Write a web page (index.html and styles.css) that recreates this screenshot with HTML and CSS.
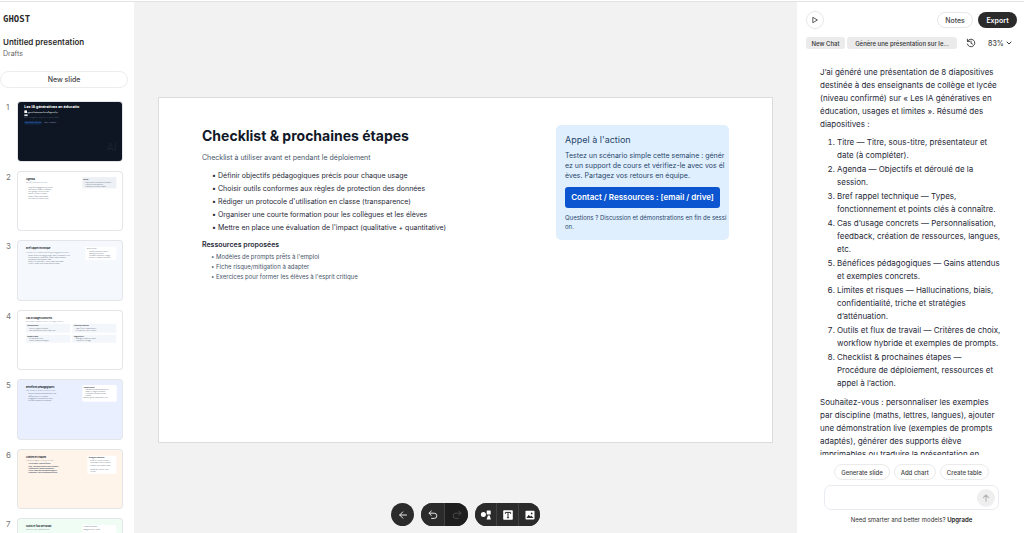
FILE: index.html
```html
<!DOCTYPE html>
<html lang="fr">
<head>
<meta charset="utf-8">
<meta name="viewport" content="width=device-width, initial-scale=1">
<title>Ghost – Untitled presentation</title>
<link rel="stylesheet" href="styles.css">
</head>
<body>
<div class="app">
  <aside class="sidebar">
    <div class="logo">GHOST</div>
    <h1 class="doc-title">Untitled presentation</h1>
    <p class="doc-folder">Drafts</p>
    <button class="new-slide" type="button">New slide</button>
    <ol class="thumbs">
      <li class="thumb-row"><span class="thumb-num">1</span>
        <svg class="thumb thumb-dark" viewBox="0 0 312 175" role="img" aria-label="Slide 1">
          <text class="t-cover" x="19" y="17">Les IA génératives en éducatio</text>
          <rect x="19" y="25" width="8" height="8" fill="#fff"/>
          <text class="t-sub-bold" x="28" y="33">ages et limites pour les collèges et lyc</text>
          <rect x="19" y="37" width="10" height="5" fill="#e5e7eb"/>
          <text class="t-dim" x="19" y="49">Public : enseignants (collège et lycée), niveau confirmé</text>
          <rect x="19" y="57" width="50" height="10" rx="2" fill="#10294a"/>
          <text class="t-link" x="22" y="64">Présentateur : [Votre nom]</text>
          <text class="t-light" x="80" y="64">Date : à compléter</text>
          <text class="t-mark" x="266" y="148">AI</text>
        </svg></li>
      <li class="thumb-row"><span class="thumb-num">2</span>
        <svg class="thumb" viewBox="0 0 312 175" role="img" aria-label="Slide 2">
          <text class="t-head" x="24" y="25">Agenda</text>
          <text class="t-note" x="24" y="33">Objectifs et déroulé de la session</text>
          <g class="t-item"><text x="30" y="47">• Objectifs pédagogiques de la session</text><text x="30" y="54">• Bref rappel technique et définitions</text><text x="30" y="61">• Cas d'usage concrets en classe</text><text x="30" y="67">• Bénéfices, limites et risques</text><text x="30" y="74">• Outils et flux de travail hybride</text><text x="30" y="80">• Checklist et prochaines étapes</text></g>
          <rect x="193" y="15" width="102" height="34" fill="#edf1f6"/>
          <text class="t-label" x="196" y="24">Déroulé</text>
          <g class="t-item"><text x="202" y="32">• Présentation et discussion (30 minutes)</text><text x="202" y="38">• Ateliers et démonstrations</text><text x="202" y="44">• Questions et retours en équipe</text></g>
        </svg></li>
      <li class="thumb-row"><span class="thumb-num">3</span>
        <svg class="thumb thumb-sky" viewBox="0 0 312 175" role="img" aria-label="Slide 3">
          <text class="t-head" x="24" y="25">Bref rappel technique</text>
          <text class="t-note" x="24" y="35">Les points clés à connaître pour un usage pédagogique des modèles</text>
          <g class="t-item"><text x="30" y="46">• Types : modèles de langage, images, audio et assistants de code</text><text x="30" y="51">• Fonctionnement : prédiction de la suite à partir de données</text><text x="30" y="57">• Entraînement sur de grands corpus</text><text x="30" y="63">• Points clés : paramètres, contexte, qualité des prompts</text><text x="30" y="70">• Limites : erreurs, biais et hallucinations possibles</text></g>
          <rect x="202" y="17" width="93" height="40" fill="#fff"/>
          <text class="t-label-light" x="207" y="25">Points à retenir</text>
          <g class="t-item"><text x="213" y="34">• Vérifier toujours les sources</text><text x="213" y="40">• Protéger les données</text><text x="213" y="45">• Formuler clairement la consigne</text><text x="213" y="50">• Tester et comparer les réponses</text></g>
        </svg></li>
      <li class="thumb-row"><span class="thumb-num">4</span>
        <svg class="thumb" viewBox="0 0 312 175" role="img" aria-label="Slide 4">
          <text class="t-head" x="24" y="25">Cas d'usages concrets</text>
          <text class="t-note" x="24" y="33">Des exemples à adapter en classe — au collège et au lycée</text>
          <g fill="#f3f6fa"><rect x="24" y="38" width="133" height="27"/><rect x="163" y="38" width="132" height="27"/><rect x="24" y="71" width="133" height="24"/><rect x="163" y="71" width="132" height="24"/></g>
          <g class="t-label"><text x="28" y="46">Personnalisation</text><text x="167" y="46">Création de ressources</text><text x="28" y="78">Feedback rapide</text><text x="167" y="78">Langues et oral</text></g>
          <g class="t-item"><text x="33" y="54">• Exercices adaptés au niveau</text><text x="33" y="60">• Parcours différenciés pour chaque élève</text><text x="173" y="54">• Quiz, fiches et supports variés</text><text x="173" y="60">• Scénarios de cours et activités</text><text x="33" y="85">• Commentaires ciblés</text><text x="33" y="90">• Grilles d'évaluation partagées</text><text x="173" y="85">• Dialogue et traduction assistée</text><text x="173" y="90">• Jeux de rôle en langue</text></g>
        </svg></li>
      <li class="thumb-row"><span class="thumb-num">5</span>
        <svg class="thumb thumb-blue" viewBox="0 0 312 175" role="img" aria-label="Slide 5">
          <text class="t-head" x="24" y="25">Bénéfices pédagogiques</text>
          <text class="t-note" x="24" y="33">Gains attendus et exemples concrets en classe</text>
          <g class="t-item"><text x="30" y="43">• Gain de temps sur la préparation des cours</text><text x="30" y="50">• Différenciation et accessibilité</text><text x="30" y="57">• Engagement et motivation des élèves</text><text x="30" y="63">• Feedback immédiat et personnalisé</text></g>
          <rect x="193" y="15" width="103" height="50" rx="4" fill="#fff"/>
          <text class="t-label" x="197" y="24">Exemple concret</text>
          <g class="t-item"><text x="202" y="31">• Produire trois niveaux d'un exercice</text><text x="202" y="37">• Relire et corriger les réponses</text><text x="202" y="42">• Comparer les résultats obtenus</text><text x="202" y="47">• Évaluer</text><text x="197" y="55">Résultat : gain de temps pour la classe</text></g>
        </svg></li>
      <li class="thumb-row"><span class="thumb-num">6</span>
        <svg class="thumb thumb-cream" viewBox="0 0 312 175" role="img" aria-label="Slide 6">
          <text class="t-head" x="24" y="25">Limites et risques</text>
          <text class="t-note" x="24" y="33">Les points de vigilance à anticiper en classe</text>
          <g class="t-item t-dark"><text x="30" y="43">• Hallucinations : réponses fausses</text><text x="30" y="50">• Biais : stéréotypes présents dans les données</text><text x="30" y="57">• Confidentialité : données personnelles</text><text x="30" y="63">• Triche : production sans apprentissage réel</text><text x="30" y="70">• Dépendance : perte d'autonomie des élèves</text></g>
          <rect x="208" y="17" width="87" height="54" fill="#fff"/>
          <text class="t-label" x="212" y="25">Stratégies d'atténuation</text>
          <g class="t-item"><text x="216" y="32">• Vérifier et croiser les sources</text><text x="216" y="38">• Anonymiser toutes les données</text><text x="216" y="49">• Évaluer le processus de travail</text><text x="216" y="59">• Définir une charte de classe</text><text x="216" y="65">• Former</text></g>
        </svg></li>
      <li class="thumb-row"><span class="thumb-num">7</span>
        <svg class="thumb thumb-mint" viewBox="0 0 312 175" role="img" aria-label="Slide 7">
          <text class="t-head" x="24" y="25">Outils et flux de travail</text>
          <text class="t-note" x="24" y="33">Critères de choix et workflow hybride</text>
          <rect x="193" y="17" width="102" height="50" fill="#fff"/>
          <text class="t-label-light" x="197" y="24">Exemples de prompts</text>
          <text class="t-item" x="197" y="32">Rédige un exercice adapté</text>
        </svg></li>
    </ol>
  </aside>

  <main class="stage">
    <article class="slide">
      <section class="slide-main">
        <h2 class="slide-title">Checklist &amp; prochaines étapes</h2>
        <p class="slide-sub">Checklist à utiliser avant et pendant le déploiement</p>
        <ul class="checks">
          <li>Définir objectifs pédagogiques précis pour chaque usage</li>
          <li>Choisir outils conformes aux règles de protection des données</li>
          <li>Rédiger un protocole d'utilisation en classe (transparence)</li>
          <li>Organiser une courte formation pour les collègues et les élèves</li>
          <li>Mettre en place une évaluation de l'impact (qualitative + quantitative)</li>
        </ul>
        <h3 class="res-title">Ressources proposées</h3>
        <ul class="resources">
          <li>Modèles de prompts prêts à l'emploi</li>
          <li>Fiche risque/mitigation à adapter</li>
          <li>Exercices pour former les élèves à l'esprit critique</li>
        </ul>
      </section>
      <section class="cta">
        <h3 class="cta-title">Appel à l'action</h3>
        <p class="cta-text">Testez un scénario simple cette semaine : génér<br>ez un support de cours et vérifiez-le avec vos él<br>èves. Partagez vos retours en équipe.</p>
        <a class="cta-link" href="#contact">Contact / Ressources : [email / drive]</a>
        <p class="cta-note">Questions ? Discussion et démonstrations en fin de sessi<br>on.</p>
      </section>
    </article>

    <div class="toolbar">
      <div class="tool-group"><button class="tool tool-round" type="button" aria-label="Back"><svg viewBox="0 0 12 12"><path class="stroke" d="M9.5 6H2.8M5.8 2.9 2.7 6l3.1 3.1"/></svg></button></div>
      <div class="tool-group">
        <button class="tool tool-wide" type="button" aria-label="Undo"><svg viewBox="0 0 12 12"><path class="stroke" d="M4.3 2 2 4.2l2.3 2.3M2.2 4.2h5a2.6 2.6 0 0 1 0 5.2H4.6"/></svg></button>
        <button class="tool tool-wide tool-off" type="button" aria-label="Redo" disabled><svg viewBox="0 0 12 12"><path class="stroke" d="M7.7 2 10 4.2 7.7 6.5M9.8 4.2h-5a2.6 2.6 0 0 0 0 5.2h2.6"/></svg></button>
      </div>
      <div class="tool-group">
        <button class="tool" type="button" aria-label="Shapes"><svg viewBox="0 0 12 12" fill="#fff"><circle cx="3.4" cy="5.6" r="2.5"/><rect x="6.7" y="1.4" width="4" height="4" rx=".5"/><path d="M7.9 6.6h1.8l1.2 3.8H6.6z"/></svg></button>
        <button class="tool" type="button" aria-label="Text"><svg viewBox="0 0 12 12"><rect x="1.2" y="1.2" width="9.6" height="9.6" rx=".8" fill="#fff"/><path d="M3.4 4.8V3.4h5.2v1.4M6 3.4v5.3M4.9 8.7h2.2" fill="none" stroke="#2b2b2b"/></svg></button>
        <button class="tool" type="button" aria-label="Image"><svg viewBox="0 0 12 12"><rect x="1.5" y="1.7" width="9" height="8.8" rx=".8" fill="#fff"/><path d="M2.4 8.9 4.7 5.8l1.5 1.7 1-1 2.3 2.4z" fill="#2b2b2b"/><circle cx="7.7" cy="4.4" r=".9" fill="#2b2b2b"/></svg></button>
      </div>
    </div>
  </main>

  <aside class="panel">
    <header class="panel-top">
      <button class="play" type="button" aria-label="Play"><svg viewBox="0 0 10 10"><path d="M2.8 2.3 7.4 5 2.8 7.7z" fill="none" stroke="#333" stroke-width=".8" stroke-linejoin="round"/></svg></button>
      <div class="panel-actions">
        <button class="pill" type="button">Notes</button>
        <button class="pill pill-dark" type="button">Export</button>
      </div>
    </header>
    <div class="tabs">
      <button class="tab" type="button">New Chat</button>
      <button class="tab tab-wide" type="button">Génère une présentation sur le...</button>
      <button class="history" type="button" aria-label="History"><svg viewBox="0 0 10 10"><path d="M1.4 1.2v2.2h2.2M1.5 3.4A3.8 3.8 0 1 1 1.3 6M5 3v2.3l1.5.8" fill="none" stroke="#333" stroke-width=".9" stroke-linecap="round" stroke-linejoin="round"/></svg></button>
      <button class="zoom" type="button">83% <svg viewBox="0 0 6 6"><path d="M1 2l2 2 2-2" fill="none" stroke="#333" stroke-width="1" stroke-linecap="round"/></svg></button>
    </div>
    <div class="chat">
      <p>J’ai généré une présentation de 8 diapositives destinée à des enseignants de collège et lycée (niveau confirmé) sur « Les IA génératives en éducation, usages et limites ». Résumé des diapositives :</p>
      <ol>
        <li>Titre — Titre, sous-titre, présentateur et date (à compléter).</li>
        <li>Agenda — Objectifs et déroulé de la session.</li>
        <li>Bref rappel technique — Types, fonctionnement et points clés à connaître.</li>
        <li>Cas d’usage concrets — Personnalisation, feedback, création de ressources, langues, etc.</li>
        <li>Bénéfices pédagogiques — Gains attendus et exemples concrets.</li>
        <li>Limites et risques — Hallucinations, biais, confidentialité, triche et stratégies d’atténuation.</li>
        <li>Outils et flux de travail — Critères de choix, workflow hybride et exemples de prompts.</li>
        <li>Checklist &amp; prochaines étapes — Procédure de déploiement, ressources et appel à l’action.</li>
      </ol>
      <p>Souhaitez-vous : personnaliser les exemples par discipline (maths, lettres, langues), ajouter une démonstration live (exemples de prompts adaptés), générer des supports élève imprimables ou traduire la présentation en</p>
    </div>
    <div class="quick">
      <button class="chip" type="button">Generate slide</button>
      <button class="chip" type="button">Add chart</button>
      <button class="chip" type="button">Create table</button>
    </div>
    <form class="prompt">
      <input class="prompt-input" type="text" aria-label="Message">
      <button class="send" type="button" aria-label="Send"><svg viewBox="0 0 10 10"><path d="M5 8.2V2M2.3 4.6 5 1.9l2.7 2.7" fill="none" stroke="#b5b5b5" stroke-width="1.1" stroke-linecap="round" stroke-linejoin="round"/></svg></button>
    </form>
    <p class="upsell">Need smarter and better models? <a href="#upgrade">Upgrade</a></p>
  </aside>
</div>
</body>
</html>
```
FILE: styles.css
```css
*, *::before, *::after { box-sizing: border-box; }
body {
  margin: 0;
  font-family: Inter, "Liberation Sans", sans-serif;
  font-size: 7px;
  color: #1f2937;
  background: #fff;
}
h1, h2, h3, p, ul, ol { margin: 0; padding: 0; }
ul, .thumbs { list-style: none; }
button { font: inherit; color: inherit; margin: 0; padding: 0; border: 0; background: none; }
svg { display: block; flex: none; }

.app {
  display: grid;
  grid-template-columns: 134px minmax(0, 1fr) 227px;
  height: 100vh;
  padding-top: 2px;
  background: linear-gradient(#fff 1px, #e4e4e4 1px, #e4e4e4 2px, #fff 2px);
  overflow: hidden;
}

/* Left sidebar */
.sidebar { display: flex; flex-direction: column; min-height: 0; padding-top: 11px; overflow: hidden; }
.logo { padding-left: 3px; font: bold 9px/12px "DejaVu Sans Mono", monospace; color: #2b2b2b; }
.doc-title { margin-top: 11px; padding-left: 3px; font-size: 8px; line-height: 12px; font-weight: 600; color: #2b2b2b; }
.doc-folder { padding-left: 3px; line-height: 12px; color: #666; }
.new-slide { flex: none; width: 128px; height: 17px; margin: 11px 0 14px; border: 1px solid #ececec; border-radius: 9px; font-weight: 500; color: #444; }
.thumbs { display: flex; flex-direction: column; gap: 11px; }
.thumb-row { display: flex; }
.thumb-num { width: 18px; padding-left: 6px; line-height: 10px; font-size: 8px; color: #777; }
.thumb { width: 104px; aspect-ratio: 16 / 9; border-radius: 3px; background: #fff; box-shadow: 0 0 0 1px #e3e5e8; font-weight: 400; }
.thumb-dark { background: #0d1622; }
.thumb-sky { background: #f5f8fc; }
.thumb-blue { background: #e9effe; }
.thumb-cream { background: #fff4ea; }
.thumb-mint { background: #effdf4; }
.t-cover { font-size: 11px; font-weight: 700; fill: #fff; }
.t-sub-bold { font-size: 5px; font-weight: 600; fill: #e5e7eb; }
.t-dim { font-size: 4px; fill: #6b7a90; }
.t-link { font-size: 4px; fill: #5b9df5; }
.t-light { font-size: 4px; fill: #cbd5e1; }
.t-mark { font-size: 32px; fill: #1a2431; }
.t-head { font-size: 7px; font-weight: 700; fill: #111827; }
.t-note { font-size: 4px; fill: #64748b; }
.t-item { font-size: 4px; fill: #334155; }
.t-dark { font-weight: 600; }
.t-label { font-size: 4px; font-weight: 700; fill: #1f2937; }
.t-label-light { font-size: 4px; fill: #334155; }

/* Slide canvas */
.stage { display: flex; flex-direction: column; min-width: 0; padding: 95px 24px 7px; background: #f2f2f2; }
.slide {
  display: flex;
  justify-content: space-between;
  align-items: flex-start;
  flex: none;
  aspect-ratio: 16 / 9;
  padding: 27px 43px;
  background: #fff;
  border: 1px solid #dcdcdc;
}
.slide-title { font-size: 14px; line-height: 21px; font-weight: 700; color: #111827; }
.slide-sub { margin-top: 7px; line-height: 10px; color: #475569; }
.checks { margin-top: 6px; padding-left: 10px; font-size: 7px; line-height: 13px; color: #1f2937; }
.checks li::before { content: "•"; display: inline-block; width: 6px; }
.res-title { margin-top: 6px; font-size: 7px; line-height: 10px; font-weight: 600; }
.resources { margin-top: 2px; padding-left: 9px; font-size: 6px; line-height: 10px; color: #475569; }
.resources li::before { content: "•"; display: inline-block; width: 5px; }
.cta { flex: none; width: 173px; padding: 9px; border-radius: 5px; background: #e0effe; color: #27466b; }
.cta-title { font-size: 9px; line-height: 12px; font-weight: 400; }
.cta-text { margin-top: 5px; line-height: 10px; white-space: nowrap; }
.cta-link { display: block; margin: 6px 0 5px; border-radius: 3px; background: #0b55d0; color: #fff; font-size: 8px; line-height: 21px; font-weight: 600; text-align: center; text-decoration: none; }
.cta-note { font-size: 6px; line-height: 9px; white-space: nowrap; }

.toolbar { display: flex; justify-content: center; gap: 7px; margin-top: auto; }
.tool-group { display: flex; gap: 1px; border-radius: 12px; background: #424242; overflow: hidden; }
.tool { display: grid; place-items: center; width: 21px; height: 23px; background: #2b2b2b; }
.tool-round, .tool-wide { width: 23px; }
.tool-off { background: #1e1e1e; }
.tool svg { width: 12px; height: 12px; }
.stroke { fill: none; stroke: #e8e8e8; stroke-linecap: round; stroke-linejoin: round; }
.tool-off .stroke { stroke: #4c4c4c; }

/* Right panel */
.panel { display: flex; flex-direction: column; min-height: 0; padding: 9px 7px 8px 9px; }
.panel-top, .panel-actions, .tabs, .quick { display: flex; align-items: center; }
.panel-top { justify-content: space-between; }
.play { display: grid; place-items: center; width: 18px; height: 18px; border: 1px solid #e8e8e8; border-radius: 50%; }
.play svg, .send svg, .history svg { width: 10px; height: 10px; }
.panel-actions { gap: 5px; }
.pill { width: 36px; height: 16px; border: 1px solid #e8e8e8; border-radius: 8px; font-weight: 500; color: #444; }
.pill-dark { width: 39px; border: 0; background: #2b2b2b; color: #fff; font-weight: 600; }
.tabs { margin-top: 8px; gap: 2px; }
.tab { flex: none; width: 39px; height: 12px; border-radius: 3px; background: #ebebeb; font-size: 6px; font-weight: 500; color: #333; white-space: nowrap; }
.tab-wide { width: 110px; }
.history { margin-left: 7px; }
.zoom { display: flex; align-items: center; gap: 2px; margin-left: 10px; font-weight: 500; color: #444; }
.zoom svg { width: 6px; height: 6px; }
.chat { flex: 1; min-height: 0; margin-top: 17px; padding: 0 14px; overflow: hidden; font-size: 8px; line-height: 13px; }
.chat ol { display: flex; flex-direction: column; gap: 1px; margin: 5px 0 6px; padding-left: 17px; }
.quick { justify-content: center; gap: 4px; margin-top: 9px; }
.chip { height: 16px; padding: 0 6px; border: 1px solid #ebebeb; border-radius: 8px; font-weight: 500; font-size: 6px; color: #444; }
.prompt { display: flex; align-items: center; height: 25px; margin: 5px 18px; padding-right: 3px; border: 1px solid #e8ecf0; border-radius: 7px; }
.prompt-input { flex: 1; min-width: 0; border: 0; outline: 0; background: none; font: inherit; padding: 0 7px; }
.send { display: grid; place-items: center; width: 18px; height: 18px; border-radius: 50%; background: #efefef; }
.upsell { text-align: center; font-size: 6px; line-height: 10px; color: #333; }
.upsell a { color: #222; font-weight: 600; text-decoration: none; }
```
